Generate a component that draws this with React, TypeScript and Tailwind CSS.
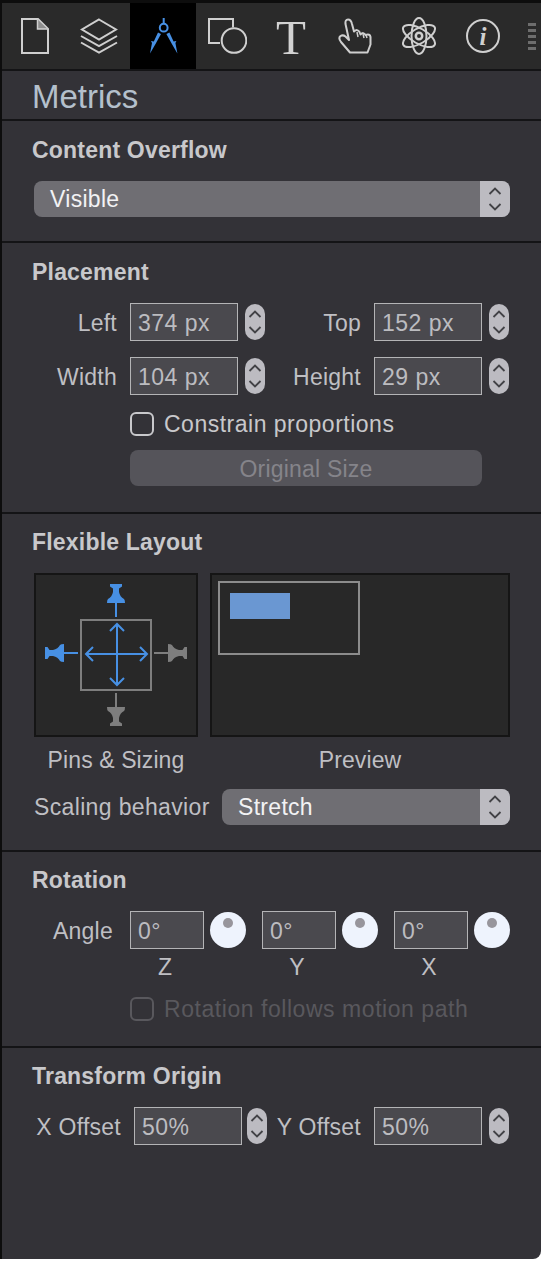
import React from "react";

const font = "[font-family:'Liberation_Sans',Arial,sans-serif]";

function Updown({ className = "" }: { className?: string }) {
  return (
    <svg viewBox="0 0 20 36" className={className} fill="none" stroke="#424246" strokeWidth="1.8">
      <path d="M4.5 13 L10 7.5 L15.5 13" />
      <path d="M4.5 23 L10 28.5 L15.5 23" />
    </svg>
  );
}

function Stepper() {
  return (
    <div className="w-[20px] h-[36px] rounded-[10px] bg-[#bcbbc1] shrink-0">
      <Updown className="w-[20px] h-[36px] block" />
    </div>
  );
}

function Title({ children }: { children: React.ReactNode }) {
  return <div className="h-[28px] leading-[28px] pl-[30px] text-[23px] font-bold tracking-[0.2px] text-[#c8c8cb] whitespace-nowrap">{children}</div>;
}

function Field({ value, w = "w-[108px]" }: { value: string; w?: string }) {
  return (
    <div className={`${w} h-[38px] border border-[#b4b4b6] bg-[#4a494e] pl-[7px] leading-[38px] text-[23px] tracking-[0.5px] text-[#bcbcc0] shrink-0 overflow-hidden`}>
      {value}
    </div>
  );
}

function Label({ children, w }: { children: React.ReactNode; w: string }) {
  return <div className={`${w} h-[38px] text-right text-[23px] leading-[40px] tracking-[0.25px] text-[#bfbfc3] shrink-0 whitespace-nowrap`}>{children}</div>;
}

function Pair({ l1, v1, l2, v2 }: { l1: string; v1: string; l2: string; v2: string }) {
  return (
    <div className="flex items-center h-[38px]">
      <Label w="w-[115px]">{l1}</Label>
      <div className="ml-[13px]"><Field value={v1} /></div>
      <div className="ml-[7px]"><Stepper /></div>
      <Label w="w-[96px]">{l2}</Label>
      <div className="ml-[13px]"><Field value={v2} /></div>
      <div className="ml-[7px]"><Stepper /></div>
    </div>
  );
}

function Select({ value, w }: { value: string; w: string }) {
  return (
    <div className={`${w} h-[36px] rounded-[8px] bg-[#6f6e73] flex overflow-hidden shrink-0`}>
      <div className="flex-1 pl-[16px] leading-[37px] text-[23px] tracking-[0.3px] text-[#f2f2f4]">{value}</div>
      <div className="w-[30px] bg-[#bcbbc1] flex justify-center">
        <Updown className="w-[20px] h-[36px] block" />
      </div>
    </div>
  );
}

function Dial() {
  return (
    <div className="w-[36px] h-[36px] rounded-full bg-[#eef3fd] flex justify-center pt-[6px] shrink-0">
      <div className="w-[10px] h-[10px] rounded-full bg-[#97959c]" />
    </div>
  );
}

const ic = "#cfcfcf";

function Toolbar() {
  const item = "w-[64px] h-[66px] flex items-center justify-center shrink-0";
  return (
    <div className="h-[66px] flex pl-px bg-[#2a2a2a] relative">
      <div className={item}>
        <svg width="28" height="36" viewBox="0 0 28 36" fill="none" stroke={ic} strokeWidth="2">
          <path d="M1 1 H17 L27 11 V35 H1 Z" />
          <path d="M16.5 1.5 V11 H26.5" strokeWidth="1.5" fill="#8d8d8d" />
        </svg>
      </div>
      <div className={item}>
        <svg width="40" height="36" viewBox="0 0 40 36" fill="none" stroke={ic} strokeWidth="2">
          <path d="M20 1.5 L37 11.5 L20 21.5 L3 11.5 Z" />
          <path d="M2 18 L20 28 L38 18" />
          <path d="M2 24.5 L20 34.5 L38 24.5" />
        </svg>
      </div>
      <div className="w-[66px] -mx-px h-[66px] bg-black flex items-center justify-center shrink-0 relative">
        <svg width="30" height="38" viewBox="0 0 30 38" fill="#4790e4" stroke="none">
          <path d="M15.7 1 V6.5" stroke="#4790e4" strokeWidth="2" fill="none" />
          <circle cx="15.7" cy="10.7" r="3.9" stroke="#4790e4" strokeWidth="2" fill="none" />
          <path d="M10 15.5 L13 17 L7.5 27 L2 36.5 L4 26 L3 24 L5.8 24.5 Z" />
          <path d="M21.4 15.5 L18.4 17 L23.9 27 L29.4 36.5 L27.4 26 L28.4 24 L25.6 24.5 Z" />
        </svg>
      </div>
      <div className={item}>
        <svg width="40" height="36" viewBox="0 0 40 36" fill="none" stroke={ic} strokeWidth="2">
          <path d="M13 25 H2 V1 H26 V9.5" />
          <circle cx="27" cy="22.5" r="12.3" />
        </svg>
      </div>
      <div className={item}>
        <span className="text-[49px] leading-none [font-family:'Liberation_Serif',serif] text-[#d2d2d2] relative top-[1px]">T</span>
      </div>
      <div className={item}>
        <svg width="34" height="36" viewBox="0 0 34 36" fill="none" stroke={ic} strokeWidth="2" strokeLinejoin="round">
          <path d="M12 34.5 L3 24 Q0 20 2.5 18 Q5 16.5 7.5 18.5 L11 22 L7.5 6 Q7 1.5 10 1.5 Q13 1.5 14 6 L16 13.5 Q19.5 10.5 21.5 14 L22.5 16.5 Q25.5 13.5 27.5 17 Q32 15.5 32.5 19 L32.5 26.5 L29.5 34.5 Z" />
          <path d="M19 14 L20 19 M25 16 L26 20 M28 17 L29 20" strokeWidth="1.5" />
        </svg>
      </div>
      <div className={item}>
        <svg width="36" height="38" viewBox="0 0 36 38" fill="none" stroke={ic} strokeWidth="2">
          <ellipse cx="18" cy="19" rx="7.5" ry="18" />
          <ellipse cx="18" cy="19" rx="7.5" ry="18" transform="rotate(60 18 19)" />
          <ellipse cx="18" cy="19" rx="7.5" ry="18" transform="rotate(-60 18 19)" />
          <circle cx="18" cy="19" r="3.2" strokeWidth="2.5" />
        </svg>
      </div>
      <div className={item}>
        <svg width="36" height="36" viewBox="0 0 36 36" fill="none">
          <circle cx="18" cy="18" r="16" stroke={ic} strokeWidth="2" />
          <text x="18" y="27" textAnchor="middle" fontFamily="'Liberation Serif', serif" fontStyle="italic" fontWeight="700" fontSize="25" fill={ic}>i</text>
        </svg>
      </div>
      <div className="w-[8px] ml-[13px] pt-[20px] flex flex-col gap-[3.5px] shrink-0">
        {[0, 1, 2, 3, 4].map((i) => <div key={i} className="h-[2.5px] bg-[#6d6d6d]" />)}
      </div>
    </div>
  );
}

function Pins() {
  const pin = "M-6 0 L6 0 L6 2.5 L3 4.5 L3 8 Q4 13 8 15 Q9 16 9 19 L-9 19 Q-9 16 -8 15 Q-4 13 -3 8 L-3 4.5 L-6 2.5 Z";
  const blue = "#4790e4";
  const grey = "#7e7e7e";
  return (
    <svg width="164" height="164" viewBox="0 0 160 160" className="block bg-[#282828] border-2 border-[#151515] box-border shrink-0">
      <g transform="translate(-2 -2)">
        <rect x="47" y="47" width="70" height="70" fill="none" stroke="#7e7e7e" strokeWidth="2" />
        <g fill={blue} stroke={blue} strokeWidth="0">
          <g transform="translate(82 11)"><path d={pin} /><path d="M0 19 V33" strokeWidth="2" /></g>
          <g transform="translate(11 80) rotate(-90)"><path d={pin} /><path d="M0 19 V33" strokeWidth="2" /></g>
        </g>
        <g fill={grey} stroke={grey} strokeWidth="0">
          <g transform="translate(82 153) rotate(180)"><path d={pin} /><path d="M0 19 V33" strokeWidth="2" /></g>
          <g transform="translate(153 80) rotate(90)"><path d={pin} /><path d="M0 19 V33" strokeWidth="2" /></g>
        </g>
        <g fill="none" stroke={blue} strokeWidth="2">
          <path d="M52 81 H113 M83 51 V112" />
          <path d="M59 74 L52 81 L59 88 M106 74 L113 81 L106 88 M76 58 L83 51 L90 58 M76 105 L83 112 L90 105" />
        </g>
      </g>
    </svg>
  );
}

function Rule() {
  return <div className="h-[2px] bg-[#141416]" />;
}

export default function App() {
  return (
    <div className={`${font} w-[546px] h-[1263px] bg-white overflow-hidden`}>
      <div className="w-[541px] h-[1259px] bg-[#333237] border-l-2 border-[#0d0d0d] rounded-br-[8px] flex flex-col">
        <div className="h-[3px] bg-[#0d0d0d]" />
        <Toolbar />
        <Rule />
        <div className="h-[48px] leading-[52px] pl-[30px] text-[33px] text-[#b4c0cc]">Metrics</div>
        <Rule />

        <div className="h-[120px] pt-[15px]">
          <Title>Content Overflow</Title>
          <div className="mt-[17px] ml-[32px]"><Select value="Visible" w="w-[476px]" /></div>
        </div>
        <Rule />

        <div className="h-[269px] pt-[15px]">
          <Title>Placement</Title>
          <div className="mt-[17px] flex flex-col gap-[16px]">
            <Pair l1="Left" v1="374 px" l2="Top" v2="152 px" />
            <Pair l1="Width" v1="104 px" l2="Height" v2="29 px" />
          </div>
          <div className="mt-[17px] ml-[128px] flex items-center h-[24px]">
            <div className="w-[24px] h-[24px] rounded-[6px] border-2 border-[#c8c8cb]" />
            <span className="ml-[10px] text-[23px] leading-[22px] tracking-[0.5px] text-[#c8c8cb] whitespace-nowrap">Constrain proportions</span>
          </div>
          <div className="mt-[14px] ml-[128px] w-[352px] h-[36px] rounded-[8px] bg-[#55545a] text-center leading-[38px] text-[23px] tracking-[0.2px] text-[#85848a]">
            Original Size
          </div>
        </div>
        <Rule />

        <div className="h-[336px] pt-[14px]">
          <Title>Flexible Layout</Title>
          <div className="mt-[17px] ml-[32px] flex gap-[12px]">
            <Pins />
            <div className="w-[300px] h-[164px] bg-[#282828] border-2 border-[#151515] pl-[6px] pt-[6px]">
              <div className="w-[142px] h-[74px] border-2 border-[#8c8c8c] pl-[10px] pt-[10px]">
                <div className="w-[60px] h-[26px] bg-[#6a97d2]" />
              </div>
            </div>
          </div>
          <div className="ml-[32px] mt-[10px] flex gap-[12px] text-[23px] tracking-[0.1px] text-[#bfbfc3] h-[26px] leading-[26px]">
            <div className="w-[164px] text-center">Pins &amp; Sizing</div>
            <div className="w-[300px] text-center">Preview</div>
          </div>
          <div className="mt-[16px] ml-[32px] flex items-center">
            <div className="w-[188px] text-[23px] tracking-[0.35px] text-[#bfbfc3] whitespace-nowrap">Scaling behavior</div>
            <Select value="Stretch" w="w-[288px]" />
          </div>
        </div>
        <Rule />

        <div className="h-[194px] pt-[14px]">
          <Title>Rotation</Title>
          <div className="mt-[17px] flex items-center h-[38px]">
            <Label w="w-[111px]">Angle</Label>
            <div className="ml-[17px]"><Field value="0°" w="w-[74px]" /></div>
            <div className="ml-[6px]"><Dial /></div>
            <div className="ml-[16px]"><Field value="0°" w="w-[74px]" /></div>
            <div className="ml-[6px]"><Dial /></div>
            <div className="ml-[16px]"><Field value="0°" w="w-[74px]" /></div>
            <div className="ml-[6px]"><Dial /></div>
          </div>
          <div className="flex ml-[126px] mt-[5px] h-[26px] leading-[26px] text-[23px] text-[#bfbfc3]">
            <div className="w-[74px] text-center">Z</div>
            <div className="w-[74px] ml-[58px] text-center">Y</div>
            <div className="w-[74px] ml-[58px] text-center">X</div>
          </div>
          <div className="mt-[17px] ml-[128px] flex items-center h-[24px]">
            <div className="w-[24px] h-[24px] rounded-[6px] border-2 border-[#59585d]" />
            <span className="ml-[10px] text-[23px] tracking-[0.55px] text-[#59585d] whitespace-nowrap">Rotation follows motion path</span>
          </div>
        </div>
        <Rule />

        <div className="flex-1 pt-[14px]">
          <Title>Transform Origin</Title>
          <div className="mt-[17px] flex items-center h-[38px]">
            <Label w="w-[119px]">X Offset</Label>
            <div className="ml-[13px]"><Field value="50%" /></div>
            <div className="ml-[5px]"><Stepper /></div>
            <Label w="w-[94px]">Y Offset</Label>
            <div className="ml-[13px]"><Field value="50%" /></div>
            <div className="ml-[7px]"><Stepper /></div>
          </div>
        </div>
      </div>
    </div>
  );
}
